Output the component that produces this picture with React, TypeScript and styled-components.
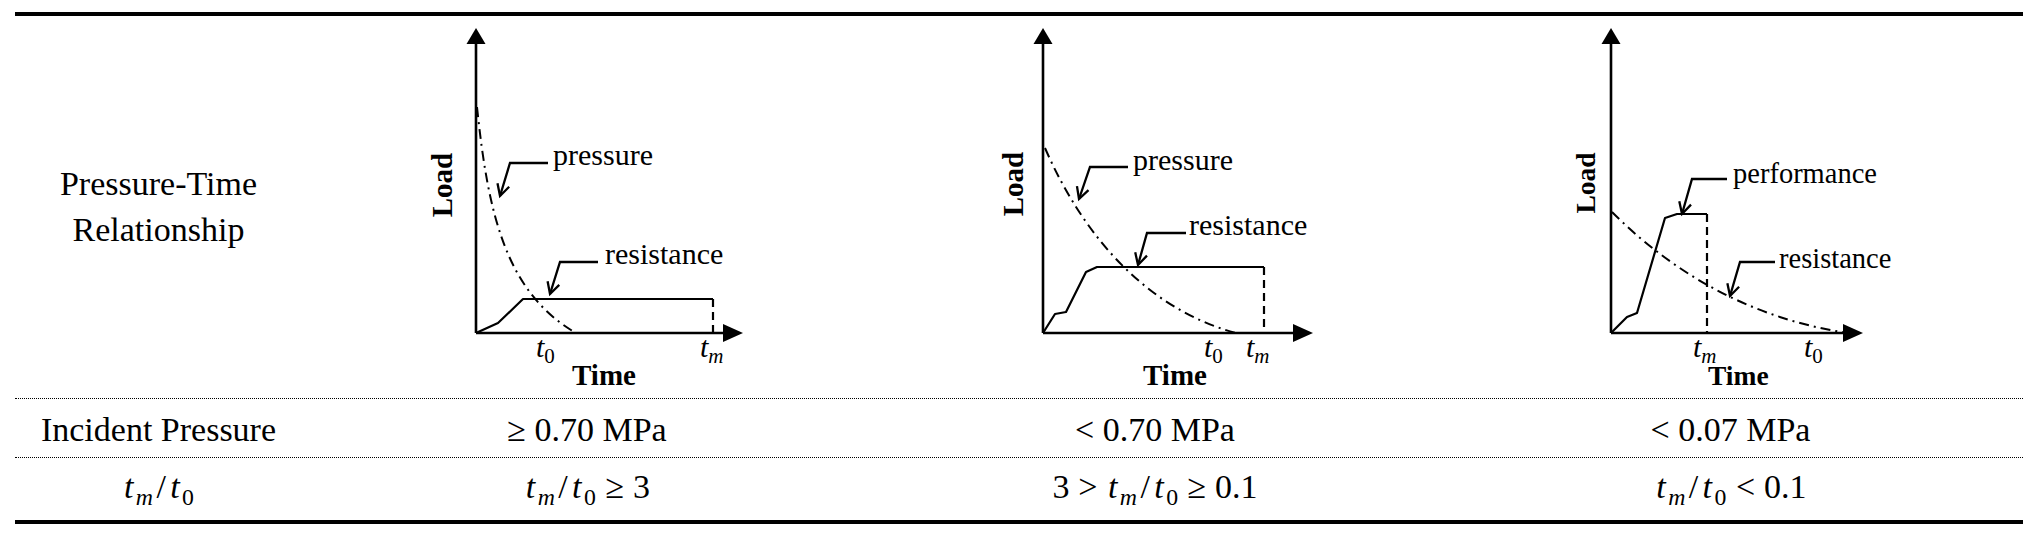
import React from "react";
import styled, { createGlobalStyle } from "styled-components";

const GlobalStyle = createGlobalStyle`
  html, body { margin: 0; padding: 0; background: #fff; }
  body { font-family: "Liberation Serif", "Times New Roman", serif; color: #000; }
`;

const COLS = "287px 570px 566px 585px";

const Table = styled.div`
  margin: 12px 0 0 15px;
  width: 2008px;
  border-top: 4px solid #000;
  border-bottom: 4px solid #000;
  font-family: "Liberation Serif", "Times New Roman", serif;
`;

const Row = styled.div<{ $height: number; $dotted?: boolean }>`
  display: grid;
  grid-template-columns: ${COLS};
  height: ${(p) => p.$height}px;
  border-bottom: ${(p) => (p.$dotted ? "1px dotted #000" : "none")};
`;

const Cell = styled.div<{ $shift?: number }>`
  display: flex;
  align-items: center;
  justify-content: center;
  text-align: center;
  font-size: 34px;
  line-height: 46px;
  padding-top: ${(p) => p.$shift ?? 0}px;
  white-space: nowrap;
`;

const PlotCell = styled.div`
  height: 100%;
  svg { display: block; }
`;

const MathText = styled.span`
  font-size: 34px;
  line-height: 1;
`;

const Var = styled.span`
  font-style: italic;
  padding: 0 0.05em;
`;

const Sub = styled.span<{ $italic?: boolean }>`
  font-size: 0.7em;
  font-style: ${(p) => (p.$italic ? "italic" : "normal")};
  vertical-align: -0.32em;
  padding: 0 0.03em;
`;

const Slash = styled.span`
  padding: 0 0.08em;
`;

const Rel = styled.span`
  padding: 0 0.26em;
`;

const Ratio: React.FC = () => (
  <>
    <Var>t</Var>
    <Sub $italic>m</Sub>
    <Slash>/</Slash>
    <Var>t</Var>
    <Sub>0</Sub>
  </>
);

type Pt = [number, number];

interface Label {
  text: string;
  x: number;
  y: number;
  leader: Pt[];
}

interface PlotSpec {
  x0: number;
  width: number;
  axisX: number;
  originY: number;
  xTip: number;
  dashDot: string;
  solid: Pt[];
  dropX: number;
  dropTop: number;
  labels: Label[];
  ticks: { sub: string; x: number; italic: boolean }[];
  timeX: number;
  loadX: number;
  loadY: number;
  fs: number;
  bfs: number;
}

const Y0 = 16;
const H1 = 382;

const arrowWings = (from: Pt, tip: Pt, len = 13, ang = 28): string => {
  const dx = from[0] - tip[0];
  const dy = from[1] - tip[1];
  const d = Math.sqrt(dx * dx + dy * dy);
  const ux = dx / d;
  const uy = dy / d;
  const r = (ang * Math.PI) / 180;
  const c = Math.cos(r);
  const s = Math.sin(r);
  const w1: Pt = [tip[0] + len * (ux * c - uy * s), tip[1] + len * (ux * s + uy * c)];
  const w2: Pt = [tip[0] + len * (ux * c + uy * s), tip[1] + len * (-ux * s + uy * c)];
  return `M${w1[0]} ${w1[1]} L${tip[0]} ${tip[1]} L${w2[0]} ${w2[1]}`;
};

const Plot: React.FC<{ spec: PlotSpec }> = ({ spec }) => {
  const s = spec;
  const pts = (p: Pt[]) => p.map((q) => q.join(",")).join(" ");
  return (
    <svg
      width={s.width}
      height={H1}
      viewBox={`${s.x0} ${Y0} ${s.width} ${H1}`}
      fontFamily='"Liberation Serif", "Times New Roman", serif'
    >
      <line x1={s.axisX} y1={s.originY} x2={s.axisX} y2={42} stroke="#000" strokeWidth={2.6} />
      <polygon points={`${s.axisX},28 ${s.axisX - 9.5},44 ${s.axisX + 9.5},44`} fill="#000" />
      <line x1={s.axisX} y1={s.originY} x2={s.xTip - 18} y2={s.originY} stroke="#000" strokeWidth={2.6} />
      <polygon
        points={`${s.xTip},${s.originY} ${s.xTip - 20},${s.originY - 9} ${s.xTip - 20},${s.originY + 9}`}
        fill="#000"
      />
      <path d={s.dashDot} fill="none" stroke="#000" strokeWidth={2} strokeDasharray="10 5 2 5" />
      <polyline points={pts(s.solid)} fill="none" stroke="#000" strokeWidth={2.2} strokeLinejoin="round" />
      <line
        x1={s.dropX}
        y1={s.dropTop}
        x2={s.dropX}
        y2={s.originY}
        stroke="#000"
        strokeWidth={2.2}
        strokeDasharray="8 5"
      />
      {s.labels.map((l) => (
        <g key={l.text + l.x}>
          <polyline points={pts(l.leader)} fill="none" stroke="#000" strokeWidth={2.3} />
          <path
            d={arrowWings(l.leader[l.leader.length - 2], l.leader[l.leader.length - 1])}
            fill="none"
            stroke="#000"
            strokeWidth={2.3}
          />
          <text x={l.x} y={l.y} fontSize={s.fs}>
            {l.text}
          </text>
        </g>
      ))}
      {s.ticks.map((t) => (
        <text key={t.sub + t.x} x={t.x} y={357} fontSize={30}>
          <tspan fontStyle="italic">t</tspan>
          <tspan fontSize={21} dy={6} fontStyle={t.italic ? "italic" : "normal"}>
            {t.sub}
          </tspan>
        </text>
      ))}
      <text x={s.timeX} y={385} fontSize={s.bfs} fontWeight="bold">
        Time
      </text>
      <text
        x={s.loadX}
        y={s.loadY}
        fontSize={s.bfs}
        fontWeight="bold"
        textAnchor="middle"
        transform={`rotate(-90 ${s.loadX} ${s.loadY})`}
      >
        Load
      </text>
    </svg>
  );
};

const plot1: PlotSpec = {
  x0: 302,
  width: 570,
  axisX: 476,
  originY: 333,
  xTip: 743,
  dashDot: "M477 107 C 488 212, 505 292, 576 333",
  solid: [
    [476, 333],
    [498, 323],
    [523, 299],
    [713, 299],
  ],
  dropX: 713,
  dropTop: 299,
  labels: [
    { text: "pressure", x: 553, y: 165, leader: [[548, 163], [510, 163], [500, 196]] },
    { text: "resistance", x: 605, y: 264, leader: [[598, 262], [560, 262], [550, 294]] },
  ],
  ticks: [
    { sub: "0", x: 536, italic: false },
    { sub: "m", x: 700, italic: true },
  ],
  timeX: 572,
  loadX: 452,
  loadY: 185,
  fs: 30,
  bfs: 29,
};

const plot2: PlotSpec = {
  x0: 872,
  width: 566,
  axisX: 1043,
  originY: 333,
  xTip: 1313,
  dashDot: "M1045 148 C 1085 240, 1150 310, 1236 333",
  solid: [
    [1043, 333],
    [1055, 314],
    [1066, 312],
    [1086, 272],
    [1097, 267],
    [1264, 267],
  ],
  dropX: 1264,
  dropTop: 267,
  labels: [
    { text: "pressure", x: 1133, y: 170, leader: [[1128, 167], [1090, 167], [1079, 199]] },
    { text: "resistance", x: 1189, y: 235, leader: [[1186, 233], [1147, 233], [1138, 265]] },
  ],
  ticks: [
    { sub: "0", x: 1204, italic: false },
    { sub: "m", x: 1246, italic: true },
  ],
  timeX: 1143,
  loadX: 1023,
  loadY: 184,
  fs: 30,
  bfs: 29,
};

const plot3: PlotSpec = {
  x0: 1438,
  width: 585,
  axisX: 1611,
  originY: 333,
  xTip: 1863,
  dashDot: "M1612 212 C 1680 280, 1760 320, 1848 333",
  solid: [
    [1611, 333],
    [1627, 317],
    [1637, 313],
    [1665, 218],
    [1677, 214],
    [1707, 214],
  ],
  dropX: 1707,
  dropTop: 214,
  labels: [
    { text: "performance", x: 1733, y: 183, leader: [[1727, 179], [1692, 179], [1682, 214]] },
    { text: "resistance", x: 1779, y: 268, leader: [[1775, 262], [1740, 262], [1730, 296]] },
  ],
  ticks: [
    { sub: "m", x: 1693, italic: true },
    { sub: "0", x: 1804, italic: false },
  ],
  timeX: 1708,
  loadX: 1595,
  loadY: 183,
  fs: 28.5,
  bfs: 27.5,
};

export default function App() {
  return (
    <>
      <GlobalStyle />
      <Table>
        <Row $height={H1} $dotted>
          <Cell>
            Pressure-Time
            <br />
            Relationship
          </Cell>
          <PlotCell>
            <Plot spec={plot1} />
          </PlotCell>
          <PlotCell>
            <Plot spec={plot2} />
          </PlotCell>
          <PlotCell>
            <Plot spec={plot3} />
          </PlotCell>
        </Row>
        <Row $height={58} $dotted>
          <Cell $shift={4}>Incident Pressure</Cell>
          <Cell $shift={4}>≥ 0.70 MPa</Cell>
          <Cell $shift={4}>&lt; 0.70 MPa</Cell>
          <Cell $shift={4}>&lt; 0.07 MPa</Cell>
        </Row>
        <Row $height={62}>
          <Cell $shift={2}>
            <MathText>
              <Ratio />
            </MathText>
          </Cell>
          <Cell $shift={2}>
            <MathText>
              <Ratio />
              <Rel>≥</Rel>3
            </MathText>
          </Cell>
          <Cell $shift={2}>
            <MathText>
              3<Rel>&gt;</Rel>
              <Ratio />
              <Rel>≥</Rel>0.1
            </MathText>
          </Cell>
          <Cell $shift={2}>
            <MathText>
              <Ratio />
              <Rel>&lt;</Rel>0.1
            </MathText>
          </Cell>
        </Row>
      </Table>
    </>
  );
}
